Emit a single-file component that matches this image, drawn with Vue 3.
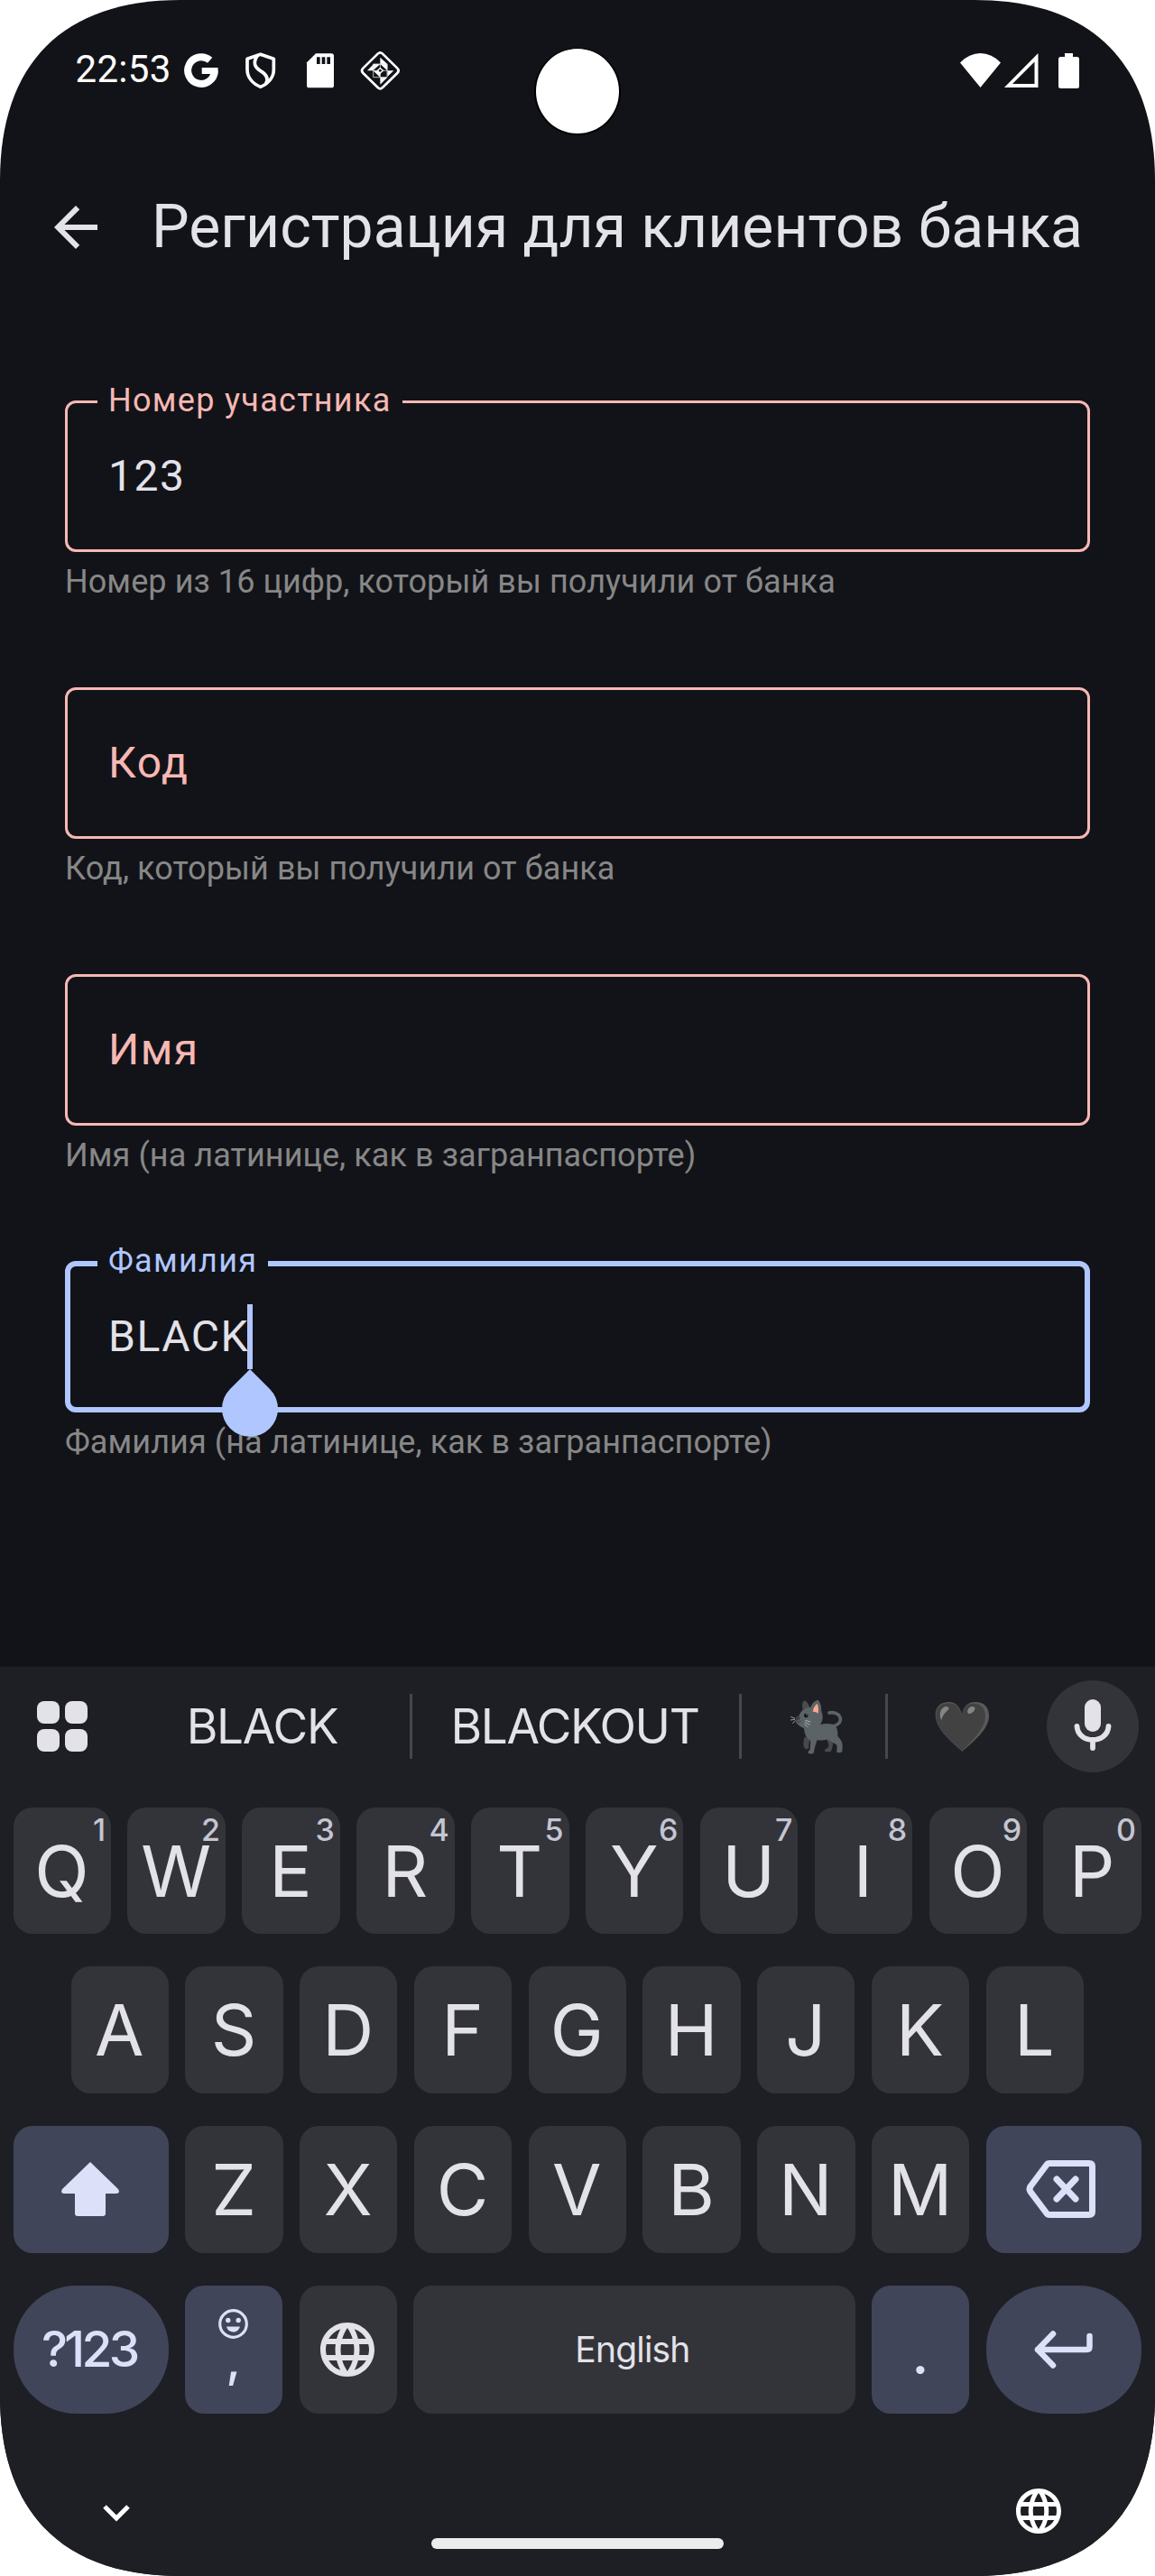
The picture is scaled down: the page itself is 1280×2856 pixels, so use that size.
<script setup>
const fields = [
  { label: 'Номер участника', value: '123', hint: 'Номер из 16 цифр, который вы получили от банка', state: 'error' },
  { label: 'Код', value: '', hint: 'Код, который вы получили от банка', state: 'error' },
  { label: 'Имя', value: '', hint: 'Имя (на латинице, как в загранпаспорте)', state: 'error' },
  { label: 'Фамилия', value: 'BLACK', hint: 'Фамилия (на латинице, как в загранпаспорте)', state: 'focus' }
]
const row1 = [...'QWERTYUIOP'].map((c, i) => ({ c, n: (i + 1) % 10 }))
const row2 = [...'ASDFGHJKL']
const row3 = [...'ZXCVBNM']
const globe =
  'M11.99 2C6.47 2 2 6.48 2 12s4.47 10 9.99 10C17.52 22 22 17.52 22 12S17.52 2 11.99 2zm6.93 6h-2.95c-.32-1.25-.78-2.45-1.38-3.56 1.84.63 3.37 1.91 4.33 3.56zM12 4.04c.83 1.2 1.48 2.53 1.91 3.96h-3.82c.43-1.43 1.08-2.76 1.91-3.96zM4.26 14C4.1 13.36 4 12.69 4 12s.1-1.36.26-2h3.38c-.08.66-.14 1.32-.14 2 0 .68.06 1.34.14 2H4.26zm.82 2h2.95c.32 1.25.78 2.45 1.38 3.56-1.84-.63-3.37-1.9-4.33-3.56zm2.95-8H5.08c.96-1.66 2.49-2.93 4.33-3.56C8.81 5.55 8.35 6.75 8.03 8zM12 19.96c-.83-1.2-1.48-2.53-1.91-3.96h3.82c-.43 1.43-1.08 2.76-1.91 3.96zM14.34 14H9.66c-.09-.66-.16-1.32-.16-2 0-.68.07-1.35.16-2h4.68c.09.65.16 1.32.16 2 0 .68-.07 1.34-.16 2zm.25 5.56c.6-1.11 1.06-2.31 1.38-3.56h2.95c-.96 1.65-2.49 2.93-4.33 3.56zM16.36 14c.08-.66.14-1.32.14-2 0-.68-.06-1.34-.14-2h3.38c.16.64.26 1.31.26 2s-.1 1.36-.26 2h-3.38z'
</script>

<template>
  <div class="screen">
    <header class="status">
      <span class="time">22:53</span>
      <div class="notifications">
        <svg viewBox="20 20 120 128">
          <path d="M109 49.5A44.5 44.5 0 1 0 124.5 84" fill="none" stroke="#fff" stroke-width="24" />
          <path d="M82 74H135.500Q136.500 84 134.500 95H82z" fill="#fff" />
        </svg>
        <svg viewBox="220 20 120 128" fill="none" stroke="#fff" stroke-width="11" stroke-linejoin="round">
          <path d="M279 30L323 45V80C323 108 303 128 279 138C255 128 235 108 235 80V45z" />
          <path d="M269 34C252 58 261 74 278 84C302 98 306 112 297 128" />
        </svg>
        <svg viewBox="420 20 120 128">
          <path d="M462 27H514a8 8 0 0 1 8 8V133a8 8 0 0 1-8 8H440a8 8 0 0 1-8-8V57z" fill="#fff" />
          <path d="M465 39h11v23h-11zM482 39h11v23h-11zM499 39h11v23h-11z" fill="#121318" />
        </svg>
        <svg viewBox="620 20 120 128">
          <path d="M667 28Q675 20 683 28L732 76Q740 84 732 92L683 140Q675 148 667 140L618 92Q610 84 618 76z" fill="none" stroke="#fff" stroke-width="8" />
          <path d="M675 40L699 62H675zM651 62L675 62L651 84zM632 84L651 64V84zM675 62L699 84V62zM651 84H675V106zM699 84H720L699 104zM675 106H699L675 130z" fill="#fff" />
          <path d="M652 62H698V106H652zM675 62V106M652 84H698" fill="none" stroke="#d8d8d8" stroke-width="2.500" />
          <path d="M663 84L675 73L687 84L675 95z" fill="#fff" />
          <circle cx="675" cy="84" r="4.500" fill="#121318" />
        </svg>
      </div>
      <div class="system">
        <svg class="wifi" viewBox="0 0 45 38"><path d="M0 10.500Q10 0 22.500 0T45 10.500L22.500 38z" fill="#fff" /></svg>
        <svg class="signal" viewBox="0 0 38 38"><path d="M37.500 0V38H0zM33.500 9.500L9 34H33.500z" fill="#fff" fill-rule="evenodd" /></svg>
        <svg class="battery" viewBox="0 0 23 39"><path d="M7 0H16V4H20.500Q23 4 23 6.500V36.500Q23 39 20.500 39H2.500Q0 39 0 36.500V6.500Q0 4 2.500 4H7z" fill="#fff" /></svg>
      </div>
      <i class="camera"></i>
    </header>

    <div class="appbar">
      <svg viewBox="0 0 24 24"><path d="M20 11H7.830l5.590-5.590L12 4l-8 8 8 8 1.410-1.410L7.830 13H20v-2z" fill="#e3e2e9" /></svg>
      <h1>Регистрация для клиентов банка</h1>
    </div>

    <main class="form">
      <div v-for="f in fields" :key="f.label" class="field" :class="f.state">
        <div class="box">
          <span v-if="f.value" class="label">{{ f.label }}</span>
          <span v-if="f.value" class="value">{{ f.value }}</span>
          <span v-else class="placeholder">{{ f.label }}</span>
          <span v-if="f.state === 'focus'" class="caret">
            <svg class="drop" viewBox="0 0 62 75"><path d="M31 0L53 22A31 31 0 1 1 9 22z" fill="#b0c6ff" /></svg>
          </span>
        </div>
        <p class="hint">{{ f.hint }}</p>
      </div>
    </main>

    <section class="keyboard">
      <div class="suggestions">
        <div class="apps"><i></i><i></i><i></i><i></i></div>
        <div class="word first">BLACK</div>
        <b class="sep"></b>
        <div class="word second">BLACKOUT</div>
        <b class="sep"></b>
        <div class="word third">
          <svg class="cat" viewBox="28 20 180 188">
            <path d="M72 56Q66 34 78 27Q90 34 95 50z" fill="#4c4c4c" />
            <path d="M78 148Q70 170 78 186Q86 192 92 184Q90 168 100 154z" fill="#484848" />
            <path d="M146 150Q160 168 158 182L148 188Q142 194 148 198H164Q170 194 174 158z" fill="#4a4a4a" />
            <path d="M160 68Q176 64 190 74Q202 86 194 100Q188 110 168 113" fill="none" stroke="#5c6366" stroke-width="11" stroke-linecap="round" />
            <path d="M72 58Q82 48 98 50Q106 28 122 25Q134 36 134 62Q144 88 130 107Q150 102 172 106Q190 112 188 146Q204 160 204 178L203 197Q194 204 184 198Q188 182 184 174Q166 164 154 156Q134 162 120 158Q112 178 108 202Q98 207 90 202Q88 196 96 190L98 160Q78 152 76 120Q64 116 50 102Q46 88 60 76Q64 66 72 58z" fill="#5c6366" />
            <path d="M105 65Q108 46 120 38Q126 50 123 70Q113 62 105 65z" fill="#ffa68e" />
            <path d="M48 82Q54 76 64 82L60 92L48 94z" fill="#3d3d3d" />
            <path d="M52 98Q60 102 66 95" fill="none" stroke="#3a3a3a" stroke-width="3" />
            <circle cx="83" cy="77" r="7" fill="#111" /><circle cx="85" cy="74" r="2" fill="#aaa" />
            <path d="M46 87L32 81M46 90L31 92M48 94L38 103M80 93L98 98M79 99L96 108M77 104L88 115" stroke="#c9c9c9" stroke-width="2.200" />
          </svg>
        </div>
        <b class="sep"></b>
        <div class="word fourth">
          <svg class="heart" viewBox="514 30 182 168">
            <path d="M605 197C570 168 516 122 516 76C516 48 534 33 560 33C586 33 598 50 604 76C608 50 622 33 648 33C678 33 694 50 694 80C694 122 642 166 605 197z" fill="#5a5a5a" />
            <path d="M605 195C570 168 518 122 518 78C518 50 536 37 560 37C584 37 596 50 603 78C608 50 620 38 642 38C668 38 682 54 682 82C682 120 638 164 605 195z" fill="#424242" />
            <path d="M536 94C526 76 532 52 550 48Q562 48 560 58C550 66 540 76 536 94z" fill="#858585" />
            <path d="M622 66C624 52 634 44 646 50C652 60 636 72 626 72z" fill="#858585" />
          </svg>
        </div>
        <div class="mic">
          <svg viewBox="1187 1880 48 68">
            <rect x="1202" y="1884" width="18" height="36" rx="9" fill="#e3e2e9" />
            <path d="M1193.500 1914C1195 1934 1227 1934 1228.500 1914M1211 1930V1938" fill="none" stroke="#e3e2e9" stroke-width="5.800" stroke-linecap="round" />
          </svg>
        </div>
      </div>

      <div class="row">
        <div v-for="k in row1" :key="k.c" class="key"><span>{{ k.c }}</span><sup>{{ k.n }}</sup></div>
      </div>
      <div class="row inset">
        <div v-for="k in row2" :key="k" class="key"><span>{{ k }}</span></div>
      </div>
      <div class="row">
        <div class="key wide accent">
          <svg class="shift" viewBox="0 0 64 60"><path d="M32 0L63 30Q66 35 60 35H49V57Q49 60 46 60H18Q15 60 15 57V35H4Q-2 35 1 30z" fill="#dce1f9" /></svg>
        </div>
        <div v-for="k in row3" :key="k" class="key"><span>{{ k }}</span></div>
        <div class="key wide accent">
          <svg class="backspace" viewBox="0 0 78 64" fill="none" stroke="#dce1f9" stroke-width="7" stroke-linecap="round" stroke-linejoin="round">
            <path d="M26 3.500H70Q73.500 3.500 73.500 7V57Q73.500 60.500 70 60.500H26Q24 60.500 23 59L5 35Q3 32 5 29L23 5Q24 3.500 26 3.500z" />
            <path d="M34 21L55 43M55 21L34 43" />
          </svg>
        </div>
      </div>
      <div class="row last">
        <div class="key wide accent pill sym">?123</div>
        <div class="key accent emoji">
          <svg class="smile" viewBox="0 0 33 33">
            <circle cx="16.500" cy="16.500" r="14.800" fill="none" stroke="#dce1f9" stroke-width="3.200" />
            <circle cx="10.800" cy="12.500" r="2.700" fill="#dce1f9" /><circle cx="22.200" cy="12.500" r="2.700" fill="#dce1f9" />
            <path d="M9 19.500H24Q22 25.500 16.500 25.500T9 19.500z" fill="#dce1f9" />
          </svg>
          <span class="comma">,</span>
        </div>
        <div class="key"><svg class="globe" viewBox="0 0 24 24"><path :d="globe" fill="#e3e2e9" /></svg></div>
        <div class="key space">English</div>
        <div class="key accent dot"><span>.</span></div>
        <div class="key wide accent pill">
          <svg class="enter" viewBox="0 0 65 42" fill="none" stroke="#dce1f9" stroke-width="6.500" stroke-linecap="round" stroke-linejoin="round">
            <path d="M61.500 6V18Q61.500 21 58.500 21H4M21 3.500L4 21L21 38.500" />
          </svg>
        </div>
      </div>

      <footer class="nav">
        <svg class="chevron" viewBox="0 0 30 20"><path d="M2 2L15 15L28 2" fill="none" stroke="#fff" stroke-width="5" /></svg>
        <i class="gesture"></i>
        <svg class="lang" viewBox="0 0 24 24"><path :d="globe" fill="#fff" /></svg>
      </footer>
    </section>
  </div>
</template>

<style>
html, body { margin: 0; background: #fff; }
</style>

<style scoped>
* { box-sizing: border-box; }
svg { display: block; flex: none; overflow: visible; }
.screen {
  width: 1280px; height: 2856px; display: flex; flex-direction: column;
  background: #121318; color: #e3e2e9; font-family: Roboto, sans-serif; overflow: hidden;
  clip-path: path('M0 200C0 70 70 0 200 0H1080C1210 0 1280 70 1280 200V2656C1280 2786 1210 2856 1080 2856H200C70 2856 0 2786 0 2656Z');
}
.status { position: relative; height: 156px; display: flex; align-items: flex-start; padding: 0 84px 0 83.500px; }
.time { font-size: 42px; line-height: 48px; margin-top: 53px; width: 119.200px; letter-spacing: .3px; color: #fff; }
.notifications { display: flex; gap: 26.670px; margin-top: 56.670px; }
.notifications svg { width: 40px; height: 42.670px; }
.system { margin-left: auto; display: flex; align-items: flex-start; margin-top: 58.500px; }
.wifi { width: 45px; height: 38px; }
.signal { width: 38px; height: 38px; margin-left: 4px; }
.battery { width: 23px; height: 39px; margin-left: 22px; }
.camera { position: absolute; left: 592px; top: 53px; width: 96px; height: 97px; border-radius: 50%; background: #fff; border: 2px solid #000; border-top-width: 1px; }
.appbar { display: flex; align-items: center; height: 192px; padding-left: 48px; }
.appbar svg { width: 72px; height: 72px; }
h1 { margin: 0 0 0 48px; font-size: 66px; line-height: 84px; font-weight: 400; letter-spacing: .04px; white-space: nowrap; }
.form { padding: 96px 72px 0; flex: 1; }
.field { height: 318px; color: #f6b8b4; }
.field.focus { color: #b0c6ff; }
.box { position: relative; height: 168px; border: 3px solid currentColor; border-radius: 12px; padding: 0 0 2px 45px; display: flex; align-items: center; font-size: 48px; letter-spacing: 1.500px; }
.focus .box { border-width: 6px; padding-left: 42px; }
.label { position: absolute; left: 33px; top: -27px; padding: 0 12px; background: #121318; font-size: 36px; line-height: 48px; letter-spacing: 1.300px; white-space: nowrap; }
.focus .label { left: 30px; top: -30px; }
.value { color: #e3e2e9; }
.caret { position: absolute; left: 196px; top: 42px; width: 6px; height: 72px; background: #b0c6ff; }
.drop { position: absolute; left: -28px; top: 72px; width: 62px; height: 75px; }
.hint { margin: 9px 0 0; font-size: 36px; line-height: 48px; letter-spacing: .08px; color: #878787; white-space: nowrap; }
.keyboard { height: 1008px; background: #1e1f25; font-family: Inter, Roboto, sans-serif; display: flex; flex-direction: column; }
.suggestions { height: 132px; display: flex; align-items: center; padding: 0 18px 0 41px; }
.apps { display: grid; grid-template-columns: 25px 25px; gap: 6px; width: 56px; }
.apps i { height: 25px; border-radius: 8px; background: #e3e2e9; }
.sep { width: 3px; height: 72px; background: #45464f; }
.word { display: flex; align-items: center; justify-content: center; font-size: 53px; letter-spacing: -1.200px; }
.first { width: 327px; margin-left: 30px; }
.second { width: 362px; letter-spacing: -1.400px; padding-right: 2px; }
.third { width: 159px; }
.fourth { width: 165px; }
.cat { width: 60px; height: 62.700px; margin-left: 6px; }
.heart { width: 60.700px; height: 56px; }
.mic { width: 102px; height: 102px; margin-left: auto; border-radius: 50%; background: #333439; display: flex; align-items: center; justify-content: center; }
.mic svg { width: 48px; height: 68px; }
.row { display: flex; gap: 18.400px; padding: 0 15px 0 14.600px; height: 141px; margin-bottom: 36px; }
.row:nth-child(2) { height: 140px; margin-top: 24px; }
.row.last { height: 142px; margin-bottom: 0; }
.row.inset { padding: 0 79px 0 78.600px; }
.key { position: relative; flex: 1 1 0; border-radius: 21px; background: #333439; font-size: 79px; line-height: 60px; display: flex; align-items: center; justify-content: center; padding-right: 1px; padding-bottom: 1px; }
.key sup { position: absolute; right: 6px; top: 10px; font-size: 34px; line-height: 30px; font-weight: 500; color: #c5c5d3; }
.key.wide { flex: 0 0 172.300px; }
.accent { background: #404559; color: #dce1f9; }
.pill { border-radius: 70px; }
.key.sym { font-size: 55px; font-weight: 500; letter-spacing: -3.700px; padding-right: 4px; padding-bottom: 3px; }
.shift { width: 64px; height: 60px; }
.backspace { width: 78px; height: 64px; margin-left: -5px; }
.globe { width: 72px; height: 72px; }
.key.space { flex: 0 0 490px; font-size: 39px; letter-spacing: -.8px; padding-right: 4px; }
.emoji { flex-direction: column; justify-content: flex-start; padding-top: 26px; }
.smile { width: 33px; height: 33px; }
.comma { font-size: 54px; line-height: 50px; margin-top: -2px; font-weight: 500; }
.dot span { font-family: Lato, sans-serif; font-size: 60px; font-weight: 700; line-height: 60px; margin-top: 9px; }
.enter { width: 65px; height: 42px; }
.nav { flex: 1; display: flex; align-items: flex-start; justify-content: space-between; padding: 0 99px 0 114px; }
.chevron { width: 30px; height: 20px; margin-top: 101px; }
.gesture { width: 324px; height: 12px; border-radius: 6px; background: #ececec; margin: 138px 0 0 14px; }
.lang { width: 60px; height: 60px; margin-top: 78px; }
</style>
